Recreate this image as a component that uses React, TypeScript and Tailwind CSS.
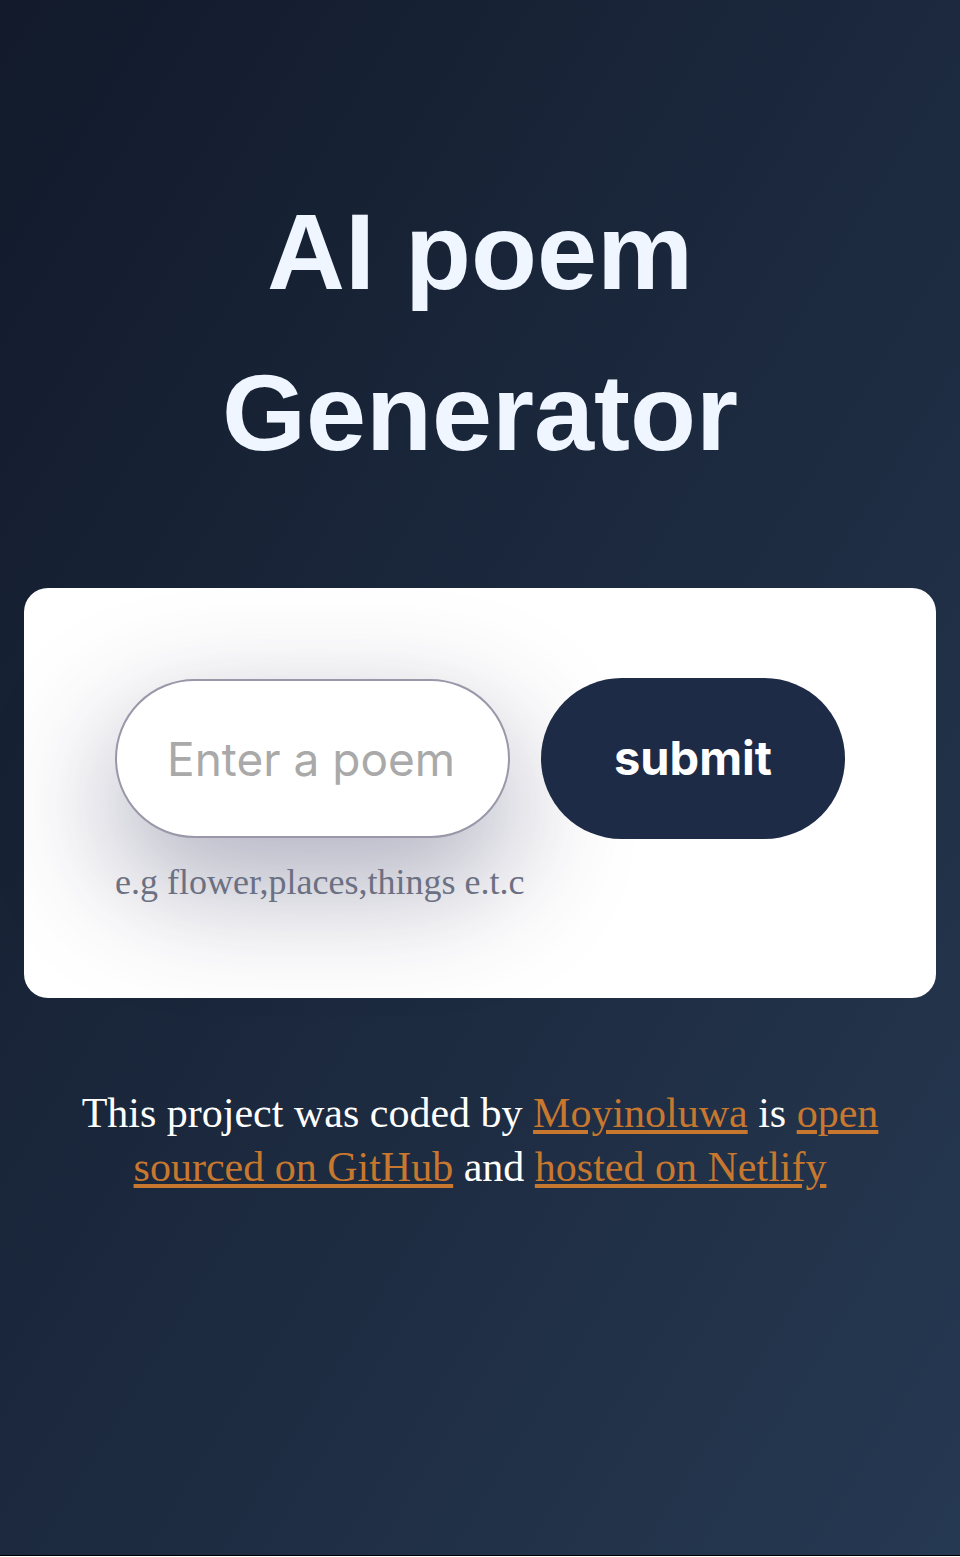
export default function App() {
  return (
    <div className="min-h-[1556px] border-b border-black bg-linear-to-br from-[#121a2b] to-[#263952] font-['Liberation_Sans',Arial,sans-serif]">
      <div className="pt-[171px]">
        <h1 className="text-center text-[108px] font-bold leading-[161px] text-[#eff6ff]">
          AI poem Generator
        </h1>
      </div>

      <div className="mx-[24px] mt-[95px] h-[410px] rounded-[24px] bg-white px-[91px] pt-[90px]">
        <form className="flex items-center gap-[31px]" onSubmit={(e) => e.preventDefault()}>
          <input
            type="text"
            placeholder="Enter a poem"
            className="h-[159px] w-[395px] rounded-full border-2 border-[#9a97a8] bg-white px-[50px] font-['Inter',sans-serif] text-[46px] text-[#333] shadow-[0_45px_120px_5px_rgba(50,50,93,0.38)] outline-none placeholder:text-[#a9a9a9]"
          />
          <button
            type="submit"
            className="h-[161px] w-[305px] rounded-full bg-[#1e2b47] font-['Inter',sans-serif] text-[47px] font-bold text-white"
          >
            submit
          </button>
        </form>
        <p className="mt-[16px] font-['Liberation_Serif','Times_New_Roman',serif] text-[36px] text-[#6b7082]">
          e.g flower,places,things e.t.c
        </p>
      </div>

      <footer className="mt-[88px] px-[60px] text-center font-['Liberation_Serif','Times_New_Roman',serif] text-[42px] leading-[54px] text-white">
        This project was coded by{" "}
        <a href="#" className="text-[#c8782e] underline">
          Moyinoluwa
        </a>{" "}
        is{" "}
        <a href="#" className="text-[#c8782e] underline">
          open sourced on GitHub
        </a>{" "}
        and{" "}
        <a href="#" className="text-[#c8782e] underline">
          hosted on Netlify
        </a>
      </footer>
    </div>
  );
}
